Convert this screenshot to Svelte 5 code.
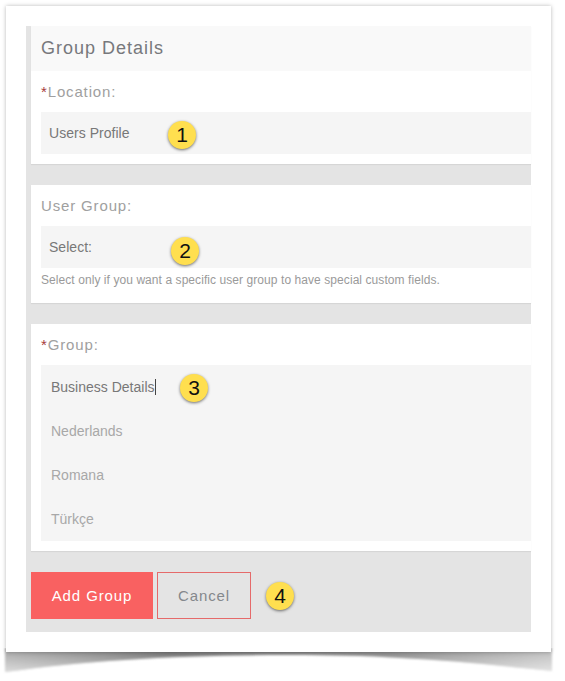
<script lang="ts">
  const groups = ['Nederlands', 'Romana', 'Türkçe'];
</script>

{#snippet badge(n: number)}
  <span class="badge">{n}</span>
{/snippet}

<div class="page">
  <svg class="curl" width="565" height="40" viewBox="0 0 565 40" aria-hidden="true">
    <defs>
      <linearGradient id="curlFill" x1="0" x2="1" y1="0" y2="0">
        <stop offset="0" stop-color="#b0b0b0" />
        <stop offset="0.3" stop-color="#787878" />
        <stop offset="0.7" stop-color="#8c8c8c" />
        <stop offset="1" stop-color="#c4c4c4" />
      </linearGradient>
      <linearGradient id="curlFade" x1="0" x2="0" y1="0" y2="1">
        <stop offset="0.2" stop-color="#fff" stop-opacity="0" />
        <stop offset="1" stop-color="#fff" stop-opacity="0.55" />
      </linearGradient>
      <filter id="curlBlur" x="-5%" y="-50%" width="110%" height="200%">
        <feGaussianBlur stdDeviation="1" />
      </filter>
    </defs>
    <g filter="url(#curlBlur)">
      <path d="M5 0 H552 V23 C450 12 380 7 290 7 C180 7 90 12 5 24 Z" fill="url(#curlFill)" />
      <path d="M5 0 H552 V23 C450 12 380 7 290 7 C180 7 90 12 5 24 Z" fill="url(#curlFade)" />
    </g>
  </svg>

  <div class="paper">
    <form class="panel">
      <section class="card">
        <h2 class="title">Group Details</h2>
        <div class="body first">
          <div class="label"><span class="req">*</span>Location:</div>
          <div class="field">Users Profile {@render badge(1)}</div>
        </div>
      </section>

      <section class="card">
        <div class="body">
          <div class="label">User Group:</div>
          <div class="field field-2">Select: {@render badge(2)}</div>
          <p class="hint">Select only if you want a specific user group to have special custom fields.</p>
        </div>
      </section>

      <section class="card">
        <div class="body">
          <div class="label"><span class="req">*</span>Group:</div>
          <div class="list">
            <div class="row current"><span class="caret">Business Details</span> {@render badge(3)}</div>
            {#each groups as g}
              <div class="row">{g}</div>
            {/each}
          </div>
        </div>
      </section>

      <div class="actions">
        <button type="button" class="btn primary">Add Group</button>
        <button type="button" class="btn ghost">Cancel</button>
        {@render badge(4)}
      </div>
    </form>
  </div>
</div>

<style>
  :global(body) {
    background: #fff;
    font-family: "Liberation Sans", Arial, sans-serif;
  }

  .page {
    position: relative;
    width: 565px;
    height: 681px;
    padding: 6px 0 0 6px;
    box-sizing: border-box;
    overflow: hidden;
  }

  .curl {
    position: absolute;
    left: 0;
    top: 648px;
  }

  .paper {
    position: relative;
    width: 545px;
    height: 646px;
    padding: 20px;
    box-sizing: border-box;
    background: #fff;
    box-shadow: 0 0 4px rgba(0, 0, 0, 0.28);
  }

  .panel {
    height: 606px;
    box-sizing: border-box;
    background: #e4e4e4;
    padding-left: 5px;
    display: flex;
    flex-direction: column;
    gap: 21px;
  }

  .card {
    background: #fff;
    box-shadow: 0 1px 1px rgba(0, 0, 0, 0.06);
  }

  .title {
    margin: 0;
    height: 45px;
    padding-left: 10px;
    background: #f9f9f9;
    color: #77787c;
    font-size: 18px;
    font-weight: 400;
    letter-spacing: 1px;
    line-height: 45px;
  }

  .body {
    padding: 11px 0 10px 10px;
  }

  .label {
    height: 30px;
    color: #a0a0a0;
    font-size: 15px;
    letter-spacing: 0.85px;
    line-height: 20px;
  }

  .req {
    color: #a83a3a;
  }

  .field {
    position: relative;
    height: 42px;
    padding-left: 8px;
    background: #f5f5f5;
    color: #787878;
    font-size: 14px;
    letter-spacing: 0.03px;
    line-height: 42px;
  }

  .field-2 {
    margin-bottom: 3px;
  }

  .field .badge {
    left: 127px;
    top: 9px;
  }

  .field-2 .badge {
    left: 130px;
    top: 11px;
  }

  .hint {
    margin: 0;
    height: 22px;
    color: #9a9a9a;
    font-size: 12px;
    letter-spacing: 0.07px;
    line-height: 16px;
    padding-top: 1px;
    box-sizing: border-box;
  }

  .list {
    position: relative;
    height: 176px;
    background: #f5f5f5;
  }

  .row {
    height: 44px;
    padding-left: 10px;
    color: #a8a8a8;
    font-size: 14px;
    line-height: 44px;
  }

  .row.current {
    color: #787878;
  }

  .caret {
    border-right: 1px solid #444;
  }

  .row .badge {
    left: 139px;
    top: 9px;
  }

  .actions {
    flex: 1;
    margin-top: -21px;
    display: flex;
    align-items: center;
    gap: 4px;
    padding: 21px 0 13px;
    box-sizing: border-box;
  }

  .btn {
    height: 47px;
    padding: 0;
    font-family: inherit;
    font-size: 15px;
    letter-spacing: 0.9px;
    cursor: pointer;
    box-sizing: border-box;
  }

  .primary {
    width: 122px;
    background: #f96161;
    border: none;
    color: #fff;
  }

  .ghost {
    width: 94px;
    background: transparent;
    border: 1px solid #e56a6a;
    color: #84888c;
  }

  .badge {
    position: absolute;
    width: 28px;
    height: 28px;
    border-radius: 50%;
    background: #ffdf4f;
    box-shadow: 0 1px 3px rgba(0, 0, 0, 0.55);
    color: #111;
    font-size: 21px;
    line-height: 28px;
    text-align: center;
  }

  .actions .badge {
    position: static;
    margin-left: 11px;
    flex: none;
  }
</style>
